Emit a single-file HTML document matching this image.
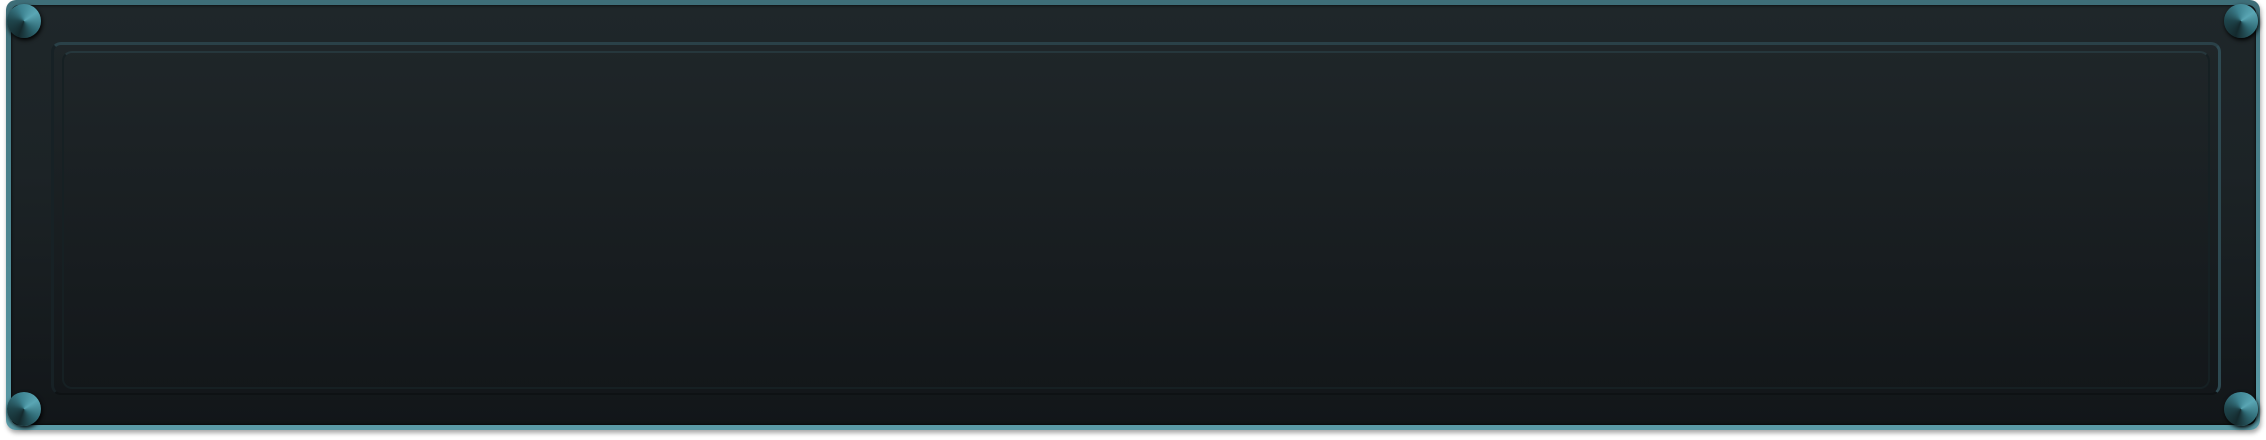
<!DOCTYPE html><html><head><style>
body{margin:0;width:2266px;height:440px;background:#fff;overflow:hidden;position:relative}
.outer{position:absolute;left:6px;top:0;width:2254px;height:430px;border-radius:10px;background:linear-gradient(#3e6e78,#5a9aa6);box-shadow:1px 3px 5px rgba(0,0,0,.35)}
.body{position:absolute;left:5px;top:5px;right:4px;bottom:5px;border-radius:8px;background:linear-gradient(#1f272a,#1c2326 40%,#121619);box-shadow:inset 0 0 3px #000}
.panel{position:absolute;left:40px;top:37px;width:2164px;height:348px;border-radius:10px;border-top:3px solid #2a4148;border-left:3px solid #172125;border-right:3px solid #2e4a52;border-bottom:2px solid #0e1214;background:linear-gradient(#1f2629,#13171a)}
.panel2{position:absolute;left:8px;top:6px;right:8px;bottom:4px;border-radius:10px;border:2px solid #162023;border-top-color:#26373c}
.s{position:absolute;width:34px;height:34px;border-radius:50%;background:conic-gradient(from 200deg,#14292d,#1f454c,#3d8290,#5aa6b4,#2f6a75,#14292d);box-shadow:1px 2px 4px #000}
</style></head><body>
<div class="outer"><div class="body"><div class="panel"><div class="panel2"></div></div></div></div>
<div class="s" style="left:7px;top:4px"></div>
<div class="s" style="left:2224px;top:4px"></div>
<div class="s" style="left:7px;top:392px"></div>
<div class="s" style="left:2224px;top:392px"></div>
</body></html>
